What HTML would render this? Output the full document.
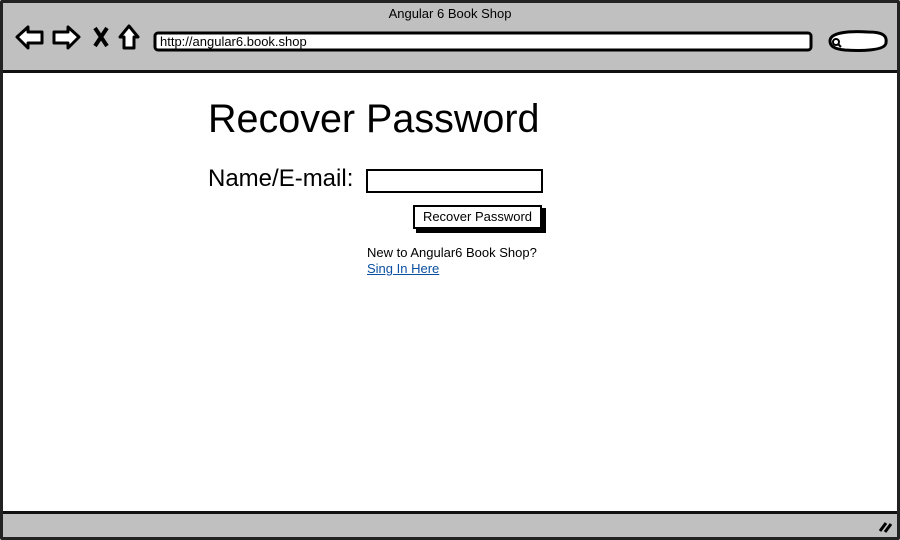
<!DOCTYPE html>
<html><head><meta charset="utf-8"><style>
*{margin:0;padding:0;box-sizing:border-box}
body{width:900px;height:540px;background:#fff;position:relative;overflow:hidden;font-family:"Liberation Sans",sans-serif;color:#000}
.a{position:absolute}
</style></head><body>
<div class="a" style="left:0;top:0;width:900px;height:540px;border:3px solid #222;border-radius:2px"></div>
<div class="a" style="left:3px;top:3px;width:894px;height:70px;background:#c0c0c0;border-bottom:3px solid #111"></div>
<div class="a" style="left:3px;top:511px;width:894px;height:26px;background:#c0c0c0;border-top:3px solid #111"></div>
<div class="a" style="left:0;top:6px;width:900px;text-align:center;font-size:13px">Angular 6 Book Shop</div>
<svg class="a" style="left:0;top:0;z-index:2" width="900" height="540">
<g fill="#fff" stroke="#000" stroke-width="3" stroke-linejoin="round">
<path d="M17 37 L28 27 L28 32 L42 32 L42 43 L28 43 L28 48 Z"/>
<path d="M79 37 L68 27 L68 32 L54 32 L54 43 L68 43 L68 48 Z"/>
<path d="M120 37 L129 26 L138 37 L134 37 L134 48 L124 48 L124 37 Z"/>
<rect x="155" y="33" width="656" height="17" rx="3"/>
<path d="M830 41 C830 32 850 31 868 32 C885 32 887 37 886 43 C885 51 860 51 845 50 C834 49 830 46 830 41Z"/>
</g>
<path d="M95 28 L107 46 M107 28 L95 46" stroke="#000" stroke-width="4"/>
<circle cx="836" cy="42" r="3" fill="none" stroke="#000" stroke-width="2"/>
<path d="M838 44 L841 47" stroke="#000" stroke-width="2"/>
<path d="M880 531 L886 523 M885 532 L891 524" stroke="#000" stroke-width="3"/>
</svg>
<div class="a" style="left:160px;top:34px;font-size:13px;z-index:3">http://angular6.book.shop</div>
<div class="a" style="left:208px;top:97px;font-size:39.5px;line-height:44px">Recover Password</div>
<div class="a" style="left:208px;top:165px;font-size:24px;line-height:28px">Name/E-mail:</div>
<div class="a" style="left:366px;top:169px;width:177px;height:24px;border:2px solid #000;background:#fff"></div>
<div class="a" style="left:416px;top:208px;width:130px;height:25px;background:#000"></div>
<div class="a" style="left:413px;top:205px;width:129px;height:24px;border:2px solid #000;background:#fff;font-size:13px;text-align:center;line-height:20px">Recover Password</div>
<div class="a" style="left:367px;top:245px;font-size:13px;line-height:16px">New to Angular6 Book Shop?<br><span style="color:#0b4fa0;text-decoration:underline">Sing In Here</span></div>
</body></html>
